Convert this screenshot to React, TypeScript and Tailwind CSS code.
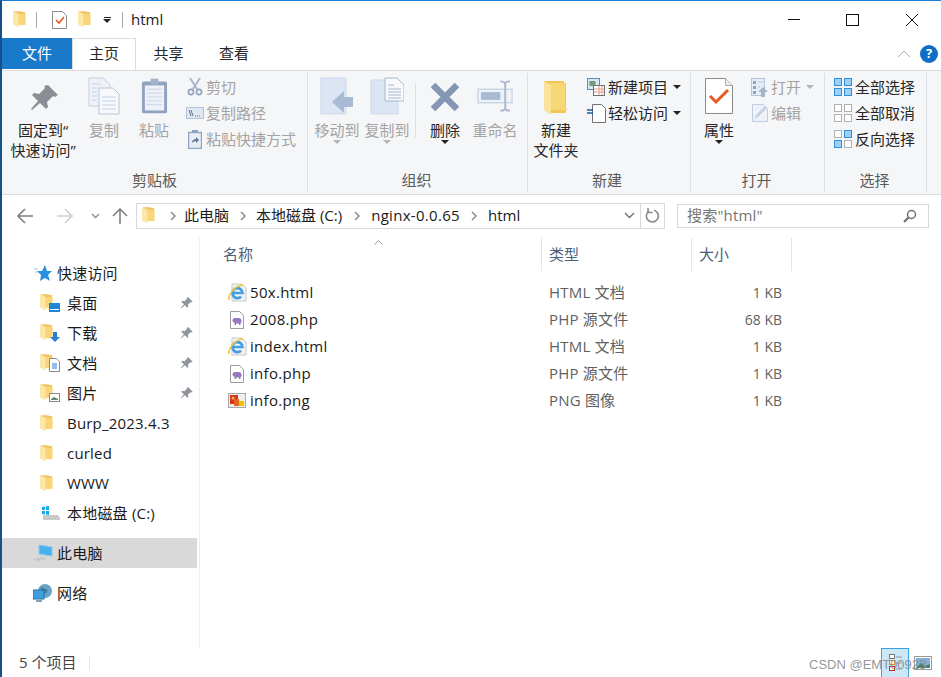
import type { ReactNode } from "react";

const font = { fontFamily: '"Open Sans","Noto Sans CJK SC",sans-serif' };

function Folder({ w = 14, h = 18 }: { w?: number; h?: number }) {
  return (
    <svg width={w} height={h} viewBox="0 0 14 18" className="shrink-0">
      <path d="M1 0h8l1 1h3v14H6z" fill="#efc566" />
      <path d="M6 3h7.5v12H6z" fill="#f8d678" />
      <path d="M0 0l6 3v15l-6-4z" fill="#fde7a8" />
    </svg>
  );
}

function BigFolder() {
  return (
    <svg width="26" height="36" viewBox="0 0 26 36" className="mt-[3px]">
      <path d="M1 1h20v2h2v30H8z" fill="#f3c655" />
      <path d="M7 3h15v24l3 3H7z" fill="#f8d775" />
      <path d="M1 1l7 4v30l-7-5z" fill="#fbe39b" />
    </svg>
  );
}

function Pin({ size = 32, color = "#8b8f95" }: { size?: number; color?: string }) {
  return (
    <svg width={size} height={size} viewBox="0 0 32 32">
      <path d="M19 3l10 10-3 2-2-1-6 6 1 5-2 2-6-6-8 7-1-1 7-8-6-6 2-2 5 1 6-6-1-2z" fill={color} />
    </svg>
  );
}

function CopyIcon() {
  return (
    <svg width="32" height="38" viewBox="0 0 32 38">
      <path d="M1 1h14l7 7v21H1z" fill="#eef2f8" stroke="#c3cfe0" />
      <path d="M11 11h14l6 6v20H11z" fill="#f7f9fc" stroke="#b8c6da" />
      <path d="M4 7h9M4 11h5M4 15h5M4 19h5M4 23h5M14 20h14M14 24h14M14 28h14M14 32h14" stroke="#c5d1e4" />
    </svg>
  );
}

function PasteIcon() {
  return (
    <svg width="27" height="38" viewBox="0 0 28 38">
      <rect x="1" y="4" width="26" height="33" rx="2" fill="#8fa2bf" />
      <rect x="4" y="8" width="20" height="26" fill="#eef2f8" />
      <path d="M6 12h16M6 16h16M6 20h16M6 24h16M6 28h16" stroke="#c8d3e6" />
      <rect x="10" y="1" width="8" height="6" fill="#a5b2c7" />
    </svg>
  );
}

function MoveIcon() {
  return (
    <svg width="34" height="38" viewBox="0 0 34 38">
      <path d="M1 1h25v36H1z" fill="#dbe5f3" stroke="#ccd9ea" />
      <path d="M13 28l12-11v6h9v10h-9v6z" transform="translate(-1 -3)" fill="#a8bad4" />
    </svg>
  );
}

function CopyToIcon() {
  return (
    <svg width="34" height="38" viewBox="0 0 34 38">
      <path d="M1 3h27v34H1z" fill="#dbe5f3" stroke="#ccd9ea" />
      <path d="M15 1h12l7 7v16H15z" fill="#f7f9fc" stroke="#a7b6cc" />
      <path d="M18 8h6M18 12h13M18 15h13M18 18h13M18 21h13" stroke="#a7b6cc" />
    </svg>
  );
}

function DeleteIcon() {
  return (
    <svg width="32" height="32" viewBox="0 0 32 32" className="mt-[2px]">
      <path d="M4 4l24 24M28 4L4 28" stroke="#8496b4" strokeWidth="6.5" />
    </svg>
  );
}

function RenameIcon() {
  return (
    <svg width="37" height="34" viewBox="0 0 38 34">
      <rect x="1" y="10" width="35" height="14" fill="#eef3fa" stroke="#b6c7de" />
      <rect x="4" y="13" width="20" height="8" fill="#a9bad4" />
      <path d="M24 2c3 0 5 1 5 3v24c0 2-2 3-5 3M34 2c-3 0-5 1-5 3M34 32c-3 0-5-1-5-3" fill="none" stroke="#a9b8cf" strokeWidth="2" />
    </svg>
  );
}

function PropsIcon() {
  return (
    <svg width="28" height="36" viewBox="0 0 28 36">
      <path d="M.5.5h20l7 7v28H.5z" fill="#fff" stroke="#8a8a8a" />
      <path d="M20.5.5v7h7" fill="#eee" stroke="#aaa" />
      <path d="M5 18l6 6L23 12" fill="none" stroke="#e9581c" strokeWidth="3" />
    </svg>
  );
}

function Scissors() {
  return (
    <svg width="16" height="18" viewBox="0 0 16 18">
      <path d="M3 0l7 11M13 0L6 11" stroke="#a9b7cc" strokeWidth="2" />
      <circle cx="4" cy="14" r="2.6" fill="none" stroke="#8fa2bf" strokeWidth="1.6" />
      <circle cx="12" cy="14" r="2.6" fill="none" stroke="#8fa2bf" strokeWidth="1.6" />
    </svg>
  );
}

function PathIcon() {
  return (
    <svg width="18" height="12" viewBox="0 0 18 12">
      <rect x=".5" y=".5" width="17" height="11" fill="#dfe7f3" stroke="#b4c3da" />
      <path d="M3 3l2 6M5 3l2 6M9 9h1M11 9h1M13 9h1" stroke="#61728f" />
    </svg>
  );
}

function ShortcutIcon() {
  return (
    <svg width="14" height="19" viewBox="0 0 14 19">
      <rect x=".5" y="2.5" width="13" height="16" fill="#e7edf6" stroke="#8fa2bf" strokeWidth="1.4" />
      <rect x="4" y="0" width="6" height="3" fill="#8fa2bf" />
      <path d="M4 13c0-3 2-4 4-4V7l3 3-3 3v-2c-2 0-3 1-4 2z" fill="#5f7392" />
    </svg>
  );
}

function NewItemIcon() {
  return (
    <svg width="19" height="19" viewBox="0 0 19 19">
      <rect x=".5" y=".5" width="12" height="11" fill="#d7e6f4" stroke="#5d8fb0" />
      <rect x="2.5" y="3" width="6" height="5" fill="#6f9c74" />
      <rect x="6.5" y="7.5" width="11" height="10" fill="#fff" stroke="#707070" />
      <path d="M12 8v9M15 8v9M7 11h10M7 14h10" stroke="#e49a8a" />
    </svg>
  );
}

function EasyAccessIcon() {
  return (
    <svg width="19" height="19" viewBox="0 0 19 19">
      <path d="M5.5.5h9l4 4v14h-13z" fill="#fff" stroke="#707070" />
      <path d="M0 6h6M0 9h6" stroke="#1d5e9e" strokeWidth="1.4" />
    </svg>
  );
}

function OpenIcon() {
  return (
    <svg width="18" height="19" viewBox="0 0 18 19">
      <rect x=".5" y=".5" width="13" height="17" fill="#e7edf6" stroke="#b4c3da" />
      <path d="M2 3h3v3H2zM2 8h3v3H2zM2 13h3v3H2z" fill="#8fa2bf" />
      <path d="M7 4h5M7 9h2" stroke="#b4c3da" />
      <path d="M7 14l5-5 5 5h-3v5h-4v-5z" fill="#a2b3cc" />
    </svg>
  );
}

function EditIcon() {
  return (
    <svg width="16" height="18" viewBox="0 0 16 18">
      <path d="M.5.5h11l4 4v13H.5z" fill="#eef2f8" stroke="#c0cde0" />
      <path d="M3 15l1-4 9-9 2 2-9 9z" fill="#c3d0e3" />
    </svg>
  );
}

function SelectIcon({ kind }: { kind: "all" | "none" | "invert" }) {
  const blue = kind === "all" ? [true, true, true, true] : kind === "none" ? [false, false, false, false] : [false, true, true, false];
  const pos = [
    [0, 0],
    [10, 0],
    [0, 10],
    [10, 10],
  ];
  return (
    <svg width="18" height="18" viewBox="0 0 18 18">
      {pos.map(([x, y], i) => (
        <rect
          key={i}
          x={x + 0.5}
          y={y + 0.5}
          width="7"
          height="7"
          fill={blue[i] ? "#9ed0f5" : "#fff"}
          stroke={blue[i] ? "#2f8fdd" : "#b0b0b0"}
        />
      ))}
    </svg>
  );
}

function IeIcon() {
  return (
    <svg width="19" height="19" viewBox="0 0 19 19">
      <path d="M4 1h10l4 4v13H4z" fill="#f2f2f2" stroke="#c8c8c8" />
      <path d="M4.5 10h10a5 5 0 1 0-1.4 3.6" fill="none" stroke="#3f9fe6" strokeWidth="2.6" />
      <path d="M1 17C0 11 8 2 15 2" fill="none" stroke="#f0c540" strokeWidth="1.6" />
    </svg>
  );
}

function PhpIcon() {
  return (
    <svg width="14" height="18" viewBox="0 0 14 18">
      <path d="M.5.5h9l4 4v13H.5z" fill="#fff" stroke="#9c9c9c" />
      <path d="M2.5 9.5c0-2 1.5-2.5 3-2.5h3c2 0 3 1 3 3 0 1 0 2-1 2v2h-1.5v-1.5h-3V14H4.5v-2.5c-1 0-2-.5-2-2z" fill="#9478c0" />
    </svg>
  );
}

function PngIcon() {
  return (
    <svg width="18" height="15" viewBox="0 0 18 15">
      <rect x=".5" y=".5" width="17" height="14" fill="#eee" stroke="#a8a8a8" />
      <rect x="2" y="2" width="8" height="9" fill="#d8341e" />
      <rect x="6" y="6" width="5" height="7" fill="#e0691f" />
      <rect x="11" y="8" width="5" height="5" fill="#f0c000" />
      <circle cx="5" cy="5" r="1.5" fill="#f4b060" />
    </svg>
  );
}

function Caret({ color = "#222" }: { color?: string }) {
  return (
    <svg width="8" height="4" viewBox="0 0 8 4">
      <path d="M0 0h8L4 4z" fill={color} />
    </svg>
  );
}

function BigButton(props: { w: number; icon: ReactNode; lines: string[]; disabled?: boolean; caret?: boolean }) {
  return (
    <div className="flex flex-col items-center" style={{ width: props.w }}>
      <div className="h-[44px] flex items-center justify-center">{props.icon}</div>
      <div className="mt-[2px] flex flex-col items-center">
        {props.lines.map((l) => (
          <div
            key={l}
            className={`h-[20px] leading-[20px] text-[15px] whitespace-nowrap ${props.disabled ? "text-[#a3a3a3]" : "text-[#262626]"}`}
          >
            {l}
          </div>
        ))}
      </div>
      {props.caret && (
        <div className="flex">
          <Caret color={props.disabled ? "#b4b4b4" : "#222"} />
        </div>
      )}
    </div>
  );
}

function SmallButton(props: { icon: ReactNode; label: string; disabled?: boolean; caret?: boolean; iconW?: number }) {
  return (
    <div className="h-[26px] flex items-center">
      <div className="flex justify-center shrink-0" style={{ width: props.iconW ?? 22 }}>
        {props.icon}
      </div>
      <span className={`text-[15px] whitespace-nowrap ${props.disabled ? "text-[#a3a3a3]" : "text-[#262626]"}`}>
        {props.label}
      </span>
      {props.caret && (
        <span className="ml-[5px] flex">
          <Caret color={props.disabled ? "#b4b4b4" : "#222"} />
        </span>
      )}
    </div>
  );
}

function Group(props: { w: number; label: string; children: ReactNode; labelPr?: number }) {
  return (
    <div className="flex flex-col h-full border-r border-[#dcdfe3]" style={{ width: props.w }}>
      <div className="flex-1 flex pt-[1px] min-h-0">{props.children}</div>
      <div className="h-[24px] text-center text-[15px] leading-[24px] text-[#5a5a5a]" style={{ paddingRight: props.labelPr ?? 0 }}>
        {props.label}
      </div>
    </div>
  );
}

function Chevron() {
  return (
    <svg width="6" height="10" viewBox="0 0 6 10" className="shrink-0">
      <path d="M1 1l4 4-4 4" fill="none" stroke="#8a8a8a" strokeWidth="1.5" />
    </svg>
  );
}

function Arrow({ dir, color }: { dir: "left" | "right" | "up"; color: string }) {
  const rot = dir === "left" ? 0 : dir === "right" ? 180 : 90;
  return (
    <svg width="16" height="16" viewBox="0 0 16 16" style={{ transform: `rotate(${rot}deg)` }}>
      <path d="M1 8h15M8 1L1 8l7 7" fill="none" stroke={color} strokeWidth="1.6" />
    </svg>
  );
}

function NavRow(props: { icon: ReactNode; label: string; pin?: boolean; indent?: boolean; selected?: boolean }) {
  return (
    <div className={`h-[30px] flex items-center w-[195px] ${props.selected ? "bg-[#d9d9d9]" : ""}`}>
      <div className={`flex justify-center shrink-0 ${props.indent ? "ml-[36px] w-[26px]" : "ml-[28px] w-[25px]"}`}>
        {props.icon}
      </div>
      <span className={`text-[15px] tracking-[0.2px] text-[#1a1a1a] whitespace-nowrap ${props.indent ? "ml-[3px]" : "ml-[2px]"}`}>
        {props.label}
      </span>
      {props.pin && (
        <span className="ml-auto mr-[3px] flex">
          <Pin size={14} color="#8f959c" />
        </span>
      )}
    </div>
  );
}

function FolderWith({ children }: { children: ReactNode }) {
  return (
    <span className="relative flex w-[22px] h-[18px]">
      <Folder w={13} h={17} />
      <span className="absolute right-[2px] bottom-0 flex">{children}</span>
    </span>
  );
}

const files = [
  { name: "50x.html", type: "HTML 文档", size: "1 KB", icon: <IeIcon /> },
  { name: "2008.php", type: "PHP 源文件", size: "68 KB", icon: <PhpIcon /> },
  { name: "index.html", type: "HTML 文档", size: "1 KB", icon: <IeIcon /> },
  { name: "info.php", type: "PHP 源文件", size: "1 KB", icon: <PhpIcon /> },
  { name: "info.png", type: "PNG 图像", size: "1 KB", icon: <PngIcon /> },
];

export default function App() {
  return (
    <div
      className="relative w-[941px] h-[677px] overflow-hidden bg-white border-t border-t-[#1a7fd4] border-l-2 border-l-[#14508c] flex flex-col"
      style={font}
    >
      {/* title bar */}
      <div className="h-[37px] flex items-center shrink-0 pl-[11px]">
        <Folder w={13} h={17} />
        <div className="w-px h-[16px] bg-[#a8a8a8] ml-[10px]" />
        <svg width="15" height="18" viewBox="0 0 15 18" className="ml-[15px]">
          <path d="M.5.5h10l4 4v13H.5z" fill="#fff" stroke="#8a8a8a" />
          <path d="M4 9l3 3 5-6" fill="none" stroke="#e9581c" strokeWidth="1.6" />
        </svg>
        <span className="ml-[11px] flex">
          <Folder w={13} h={17} />
        </span>
        <span className="ml-[12px] flex flex-col items-center gap-[1px]">
          <span className="w-[7px] h-px bg-[#222]" />
          <Caret />
        </span>
        <div className="w-px h-[16px] bg-[#a8a8a8] ml-[11px]" />
        <span className="ml-[8px] text-[15px] text-[#1a1a1a]">html</span>
        <div className="ml-auto flex items-center">
          <div className="w-[12px] h-px bg-[#111] mr-[46px]" />
          <div className="w-[13px] h-[12px] border border-[#111] mr-[47px]" />
          <svg width="12" height="12" viewBox="0 0 12 12" className="mr-[23px]">
            <path d="M0 0l12 12M12 0L0 12" stroke="#111" />
          </svg>
        </div>
      </div>

      {/* tabs */}
      <div className="h-[32px] flex shrink-0 relative">
        <div className="w-[70px] h-[31px] bg-[#1979ca] text-white text-[15px] flex items-center justify-center">文件</div>
        <div className="w-[64px] h-[32px] pb-[2px] bg-white border border-b-0 border-[#dadbdc] relative z-10 -mb-px text-[15px] text-[#262626] flex items-center justify-center">
          主页
        </div>
        <div className="w-[65px] pb-[2px] text-[15px] text-[#262626] flex items-center justify-center">共享</div>
        <div className="w-[66px] pb-[2px] text-[15px] text-[#262626] flex items-center justify-center">查看</div>
        <div className="ml-auto flex items-center pr-[3px]">
          <svg width="14" height="8" viewBox="0 0 14 8" className="mr-[9px]">
            <path d="M1 7l6-6 6 6" fill="none" stroke="#b0b0b0" />
          </svg>
          <div className="w-[18px] h-[18px] rounded-full bg-[#0f6fc6] text-white text-[13px] font-bold flex items-center justify-center">?</div>
        </div>
      </div>

      {/* ribbon */}
      <div className="h-[125px] shrink-0 bg-[#f5f6f7] border-t border-b border-[#dadbdc] flex pt-[2px] pb-[2px]">
        <Group w={306} label="剪贴板">
          <div className="ml-[5px] flex">
            <BigButton
              w={72}
              icon={
                <span className="flex ml-[4px] mt-[3px]">
                  <Pin />
                </span>
              }
              lines={["固定到“", "快速访问”"]}
            />
            <div className="w-[2px]" />
            <BigButton w={46} icon={<CopyIcon />} lines={["复制"]} disabled />
            <div className="w-[2px]" />
            <BigButton w={50} icon={<PasteIcon />} lines={["粘贴"]} disabled />
          </div>
          <div className="ml-[5px] flex flex-col">
            <SmallButton icon={<Scissors />} label="剪切" disabled />
            <SmallButton icon={<PathIcon />} label="复制路径" disabled />
            <SmallButton icon={<ShortcutIcon />} label="粘贴快捷方式" disabled />
          </div>
        </Group>
        <Group w={220} label="组织" labelPr={2}>
          <div className="ml-[4px] flex">
            <BigButton w={50} icon={<MoveIcon />} lines={["移动到"]} disabled caret />
            <BigButton w={50} icon={<CopyToIcon />} lines={["复制到"]} disabled caret />
            <div className="w-px h-[55px] bg-[#dcdfe3] mt-[9px] ml-[3px] mr-[4px]" />
            <BigButton w={50} icon={<DeleteIcon />} lines={["删除"]} caret />
            <BigButton w={50} icon={<RenameIcon />} lines={["重命名"]} disabled />
          </div>
        </Group>
        <Group w={163} label="新建" labelPr={4}>
          <div className="ml-[3px] flex">
            <BigButton w={50} icon={<BigFolder />} lines={["新建", "文件夹"]} />
            <div className="ml-[3px] flex flex-col">
              <SmallButton iconW={24} icon={<NewItemIcon />} label="新建项目" caret />
              <SmallButton iconW={24} icon={<EasyAccessIcon />} label="轻松访问" caret />
            </div>
          </div>
        </Group>
        <Group w={134} label="打开" labelPr={2}>
          <div className="ml-[3px] flex">
            <BigButton w={50} icon={<PropsIcon />} lines={["属性"]} caret />
            <div className="ml-[5px] flex flex-col">
              <SmallButton icon={<OpenIcon />} label="打开" disabled caret />
              <SmallButton icon={<EditIcon />} label="编辑" disabled />
            </div>
          </div>
        </Group>
        <Group w={102} label="选择" labelPr={2}>
          <div className="ml-[6px] flex flex-col">
            <SmallButton iconW={24} icon={<SelectIcon kind="all" />} label="全部选择" />
            <SmallButton iconW={24} icon={<SelectIcon kind="none" />} label="全部取消" />
            <SmallButton iconW={24} icon={<SelectIcon kind="invert" />} label="反向选择" />
          </div>
        </Group>
      </div>

      {/* address bar */}
      <div className="h-[40px] shrink-0 flex items-center pt-[1px]">
        <span className="ml-[15px] flex">
          <Arrow dir="left" color="#808080" />
        </span>
        <span className="ml-[24px] flex">
          <Arrow dir="right" color="#d0d0d0" />
        </span>
        <svg width="9" height="6" viewBox="0 0 9 6" className="ml-[18px]">
          <path d="M1 1l3.5 3.5L8 1" fill="none" stroke="#8a8a8a" strokeWidth="1.3" />
        </svg>
        <span className="ml-[12px] flex">
          <Arrow dir="up" color="#808080" />
        </span>
        <div className="ml-[8px] w-[529px] h-[26px] border border-[#d9d9d9] flex items-center text-[15px] text-[#1a1a1a]">
          <span className="ml-[5px] flex">
            <Folder w={13} h={17} />
          </span>
          <span className="ml-[15px] flex">
            <Chevron />
          </span>
          <span className="ml-[8px]">此电脑</span>
          <span className="ml-[11px] flex">
            <Chevron />
          </span>
          <span className="ml-[10px]">本地磁盘 (C:)</span>
          <span className="ml-[12px] flex">
            <Chevron />
          </span>
          <span className="ml-[11px] tracking-[0.3px]">nginx-0.0.65</span>
          <span className="ml-[11px] flex">
            <Chevron />
          </span>
          <span className="ml-[11px]">html</span>
          <div className="ml-auto h-full flex items-center">
            <svg width="11" height="7" viewBox="0 0 11 7" className="mr-[5px]">
              <path d="M1 1l4.5 4.5L10 1" fill="none" stroke="#707070" strokeWidth="1.4" />
            </svg>
            <div className="w-[24px] h-full border-l border-[#d9d9d9] flex items-center justify-center">
              <svg width="15" height="15" viewBox="0 0 15 15">
                <path d="M9 2.2A6 6 0 1 1 4 3" fill="none" stroke="#8a8a8a" strokeWidth="1.6" />
                <path d="M3 0v4.5h4.5" fill="none" stroke="#8a8a8a" strokeWidth="1.6" />
              </svg>
            </div>
          </div>
        </div>
        <div className="ml-[12px] w-[252px] h-[24px] border border-[#d9d9d9] flex items-center px-[9px] text-[15px] tracking-[0.2px] text-[#757575]">
          <span>搜索"html"</span>
          <svg width="14" height="14" viewBox="0 0 14 14" className="ml-auto mr-[2px]">
            <circle cx="8.5" cy="5.5" r="4" fill="none" stroke="#707070" strokeWidth="1.5" />
            <path d="M5.5 8.5L1 13" stroke="#707070" strokeWidth="2.2" />
          </svg>
        </div>
      </div>

      {/* main */}
      <div className="flex-1 flex min-h-0 pt-[3px]">
        <div className="w-[198px] border-r border-[#eeeeee] shrink-0 pt-[20px]">
          <NavRow
            icon={
              <svg width="18" height="17" viewBox="0 0 18 17">
                <path d="M11 0l2 6h5l-4 4 2 6-5-3-5 3 1-6-4-4h5z" fill="#2b8fe0" />
                <path d="M0 4h4M1 7h3" stroke="#8fc4ef" />
              </svg>
            }
            label="快速访问"
          />
          <NavRow
            indent
            pin
            label="桌面"
            icon={
              <FolderWith>
                <svg width="11" height="9" viewBox="0 0 11 9">
                  <rect width="11" height="9" fill="#1d86d6" />
                  <rect x="1" y="6" width="9" height="1" fill="#fff" />
                </svg>
              </FolderWith>
            }
          />
          <NavRow
            indent
            pin
            label="下载"
            icon={
              <FolderWith>
                <svg width="10" height="10" viewBox="0 0 10 10">
                  <path d="M3 0h4v5h3L5 10 0 5h3z" fill="#2a7fcf" />
                </svg>
              </FolderWith>
            }
          />
          <NavRow
            indent
            pin
            label="文档"
            icon={
              <FolderWith>
                <svg width="11" height="14" viewBox="0 0 11 14">
                  <path d="M.5.5h7l3 3v10H.5z" fill="#fff" stroke="#8a8a8a" />
                  <path d="M3 6h5M3 8h5M3 10h5" stroke="#2a7fcf" />
                </svg>
              </FolderWith>
            }
          />
          <NavRow
            indent
            pin
            label="图片"
            icon={
              <FolderWith>
                <svg width="11" height="9" viewBox="0 0 11 9">
                  <rect x=".5" y=".5" width="10" height="8" fill="#fff" stroke="#8a8a8a" />
                  <path d="M2 6l3-2 4 2v1H2z" fill="#5c8a6a" />
                </svg>
              </FolderWith>
            }
          />
          <NavRow indent label="Burp_2023.4.3" icon={<span className="flex w-[22px]"><Folder w={13} h={17} /></span>} />
          <NavRow indent label="curled" icon={<span className="flex w-[22px]"><Folder w={13} h={17} /></span>} />
          <NavRow indent label="WWW" icon={<span className="flex w-[22px]"><Folder w={13} h={17} /></span>} />
          <NavRow
            indent
            label="本地磁盘 (C:)"
            icon={
              <svg width="20" height="16" viewBox="0 0 20 16">
                <path d="M2 10h15l2 3v2H2z" fill="#c9c9c9" />
                <path d="M1 2l3-.5V5H1zM5 1.3L8 1v4H5zM1 6h3v3.5L1 9zM5 6h3v4l-3-.4z" fill="#14a9e8" />
              </svg>
            }
          />
          <div className="h-[10px]" />
          <NavRow
            selected
            label="此电脑"
            icon={
              <svg width="20" height="18" viewBox="0 0 20 18">
                <path d="M6 1l13 2v9L6 10z" fill="#4ab0ee" stroke="#8ac8ee" />
                <path d="M0 15l10-2 4 2-10 2z" fill="#c8c8c8" />
              </svg>
            }
          />
          <div className="h-[10px]" />
          <NavRow
            label="网络"
            icon={
              <svg width="20" height="19" viewBox="0 0 20 19">
                <circle cx="12" cy="7" r="7" fill="#6aa3c8" />
                <path d="M8 3c3 0 3 2 5 2s2 3 0 4-4 0-5-2z" fill="#3f7f9f" />
                <rect x="0" y="6" width="11" height="9" fill="#3d9fdf" stroke="#2c6c9c" />
                <path d="M3 17h6" stroke="#8aa0b0" strokeWidth="2" />
              </svg>
            }
          />
        </div>

        <div className="flex-1 min-w-0">
          <div className="h-[33px] flex relative text-[15px] text-[#4c607a]">
            <svg width="9" height="5" viewBox="0 0 9 5" className="absolute left-[174px] top-[2px]">
              <path d="M.5 4.5l4-4 4 4" fill="none" stroke="#a0a0a0" />
            </svg>
            <div className="w-[342px] border-r border-[#e5e5e5] pl-[23px] flex items-center">名称</div>
            <div className="w-[150px] border-r border-[#e5e5e5] pl-[7px] flex items-center">类型</div>
            <div className="w-[100px] border-r border-[#e5e5e5] pl-[7px] flex items-center">大小</div>
          </div>
          <div className="pt-[8px]">
            {files.map((f) => (
              <div key={f.name} className="h-[27px] flex items-center text-[15px]">
                <div className="w-[50px] pl-[24px] flex justify-center shrink-0">{f.icon}</div>
                <div className="w-[299px] tracking-[0.3px] text-[#1a1a1a] shrink-0">{f.name}</div>
                <div className="w-[150px] tracking-[0.2px] text-[#5f5f5f] shrink-0">{f.type}</div>
                <div className="w-[83px] text-right text-[14px] text-[#5f5f5f] shrink-0">{f.size}</div>
              </div>
            ))}
          </div>
        </div>
      </div>

      {/* status bar */}
      <div className="h-[29px] shrink-0 flex items-center text-[15px] text-[#444]">
        <span className="ml-[17px] w-[70px]">5 个项目</span>
        <div className="w-px h-[14px] bg-[#e5e5e5]" />
        <div className="ml-auto flex h-full items-center">
          <div className="w-[28px] h-full bg-[#cce8f6] border border-[#3aa0e0] border-b-0 flex items-center justify-center">
            <svg width="16" height="18" viewBox="0 0 16 18">
              <rect x="2.5" y=".5" width="5" height="4" fill="#fff" stroke="#777" />
              <rect x="2.5" y="6.5" width="5" height="4" fill="#fff" stroke="#d09030" />
              <rect x="2.5" y="12.5" width="5" height="4" fill="#fff" stroke="#c03020" />
              <path d="M9 3h6M9 9h6M9 15h6" stroke="#8a9aa8" />
            </svg>
          </div>
          <svg width="18" height="14" viewBox="0 0 18 14" className="ml-[5px] mr-[9px]">
            <rect x=".5" y=".5" width="17" height="13" fill="#fff" stroke="#999" />
            <rect x="2" y="2" width="14" height="10" fill="#7fb0d4" />
            <path d="M2 12l5-5 4 3 5-2v4z" fill="#4f7f6a" />
          </svg>
        </div>
      </div>

      {/* watermark */}
      <div className="absolute left-[807px] top-[654px] text-[13px] text-[#8a8a8a]/90 font-['Liberation_Sans',sans-serif] whitespace-nowrap">
        CSDN @EMT00923
      </div>
    </div>
  );
}
